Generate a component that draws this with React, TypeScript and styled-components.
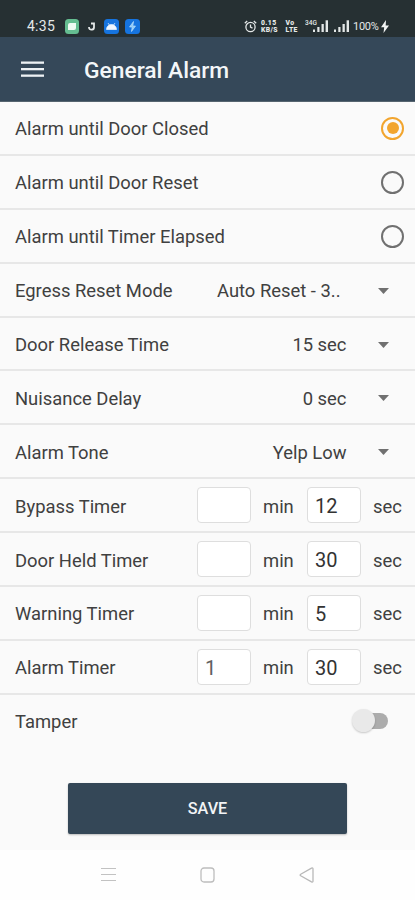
import React, { useState } from "react";
import styled, { createGlobalStyle } from "styled-components";

const GlobalStyle = createGlobalStyle`
  * { box-sizing: border-box; }
  body { margin: 0; background: #fafafa; font-family: Roboto, "Liberation Sans", sans-serif; }
`;

const Screen = styled.div`
  width: 415px;
  height: 900px;
  display: flex;
  flex-direction: column;
  overflow: hidden;
  background: #fafafa;
  color: #404040;
`;

const StatusBar = styled.div`
  height: 37px;
  flex: none;
  display: flex;
  align-items: flex-end;
  justify-content: space-between;
  padding: 0 26px 3px 27px;
  background: #263033;
  color: #e4e8e8;
`;

const StatusGroup = styled.div<{ $gap: number }>`
  display: flex;
  align-items: center;
  height: 16px;
  gap: ${(p) => p.$gap}px;
  svg { display: block; flex: none; }
`;

const Clock = styled.span`
  font-size: 14px;
  line-height: 16px;
  width: 32.5px;
  letter-spacing: 0.25px;
  white-space: nowrap;
`;

const Stack = styled.span<{ $width: number }>`
  display: flex;
  flex-direction: column;
  width: ${(p) => p.$width}px;
  padding-top: 1px;
  font-size: 6.8px;
  font-weight: 900;
  line-height: 7px;
  letter-spacing: 0.4px;
  white-space: nowrap;
`;

const Battery = styled.span`
  font-size: 11px;
  line-height: 16px;
  width: 23.5px;
  padding-top: 1px;
  letter-spacing: -0.3px;
`;

const AppBar = styled.header`
  height: 65px;
  flex: none;
  display: flex;
  align-items: center;
  gap: 40px;
  padding: 0 22px 0 21px;
  background: #354859;
  border-bottom: 1px solid #566570;
`;

const MenuButton = styled.button`
  display: flex;
  padding: 0;
  border: 0;
  background: none;
`;

const Title = styled.h1`
  margin: 3px 0 0;
  font-size: 22.8px;
  line-height: 30px;
  font-weight: 500;
  color: #f3f6f8;
  white-space: nowrap;
`;

const Settings = styled.main`
  flex: none;
  display: flex;
  flex-direction: column;
`;

const Row = styled.div<{ $last?: boolean }>`
  height: 53.9px;
  flex: none;
  display: flex;
  align-items: center;
  padding: 0 12px 0 15px;
  border-bottom: 2px solid ${(p) => (p.$last ? "transparent" : "#e7e7e7")};
  font-size: 18.4px;
  line-height: 24px;
  white-space: nowrap;
`;

const Label = styled.span`
  flex: 1;
  padding-top: 3px;
`;

const RadioDot = styled.span<{ $on: boolean }>`
  width: 23px;
  height: 23px;
  display: grid;
  place-items: center;
  margin: 1px -1px 0 0;
  border-radius: 50%;
  border: 2px solid ${(p) => (p.$on ? "#f2a52e" : "#707070")};
  &::after {
    content: "";
    width: 12px;
    height: 12px;
    border-radius: 50%;
    background: ${(p) => (p.$on ? "#f2a52e" : "transparent")};
  }
`;

const Value = styled.span<{ $clipped?: boolean }>`
  padding-top: 3px;
  margin-right: ${(p) => (p.$clipped ? 37 : 31)}px;
`;

const Caret = styled.svg`
  display: block;
  margin: 2px 14.5px 0 0;
`;

const Field = styled.div<{ $muted?: boolean }>`
  width: 54px;
  height: 36px;
  padding: 1px 7px 0;
  border: 1px solid #dedede;
  border-radius: 4px;
  background: #fff;
  color: ${(p) => (p.$muted ? "#606060" : "#333")};
  font-size: 20px;
  line-height: 35px;
`;

const Unit = styled.span<{ $width: number }>`
  width: ${(p) => p.$width}px;
  padding-top: 3px;
  margin-left: 12px;
`;

const Toggle = styled.button`
  width: 38px;
  height: 24px;
  display: flex;
  align-items: center;
  margin: 0 13px 0 0;
  padding: 0;
  border: 0;
  background: none;
`;

const Thumb = styled.span`
  width: 23px;
  height: 23px;
  flex: none;
  border-radius: 50%;
  background: #e9e9e9;
  box-shadow: 0 1px 2px rgba(0, 0, 0, 0.2);
  z-index: 1;
`;

const Track = styled.span`
  width: 22px;
  height: 16px;
  margin-left: -9px;
  border-radius: 0 8px 8px 0;
  background: #acacac;
`;

const SaveButton = styled.button`
  width: 279px;
  height: 51px;
  flex: none;
  align-self: center;
  margin: 34px 0 16px;
  border: 0;
  border-radius: 2px;
  background: #344757;
  box-shadow: 0 1px 2px rgba(0, 0, 0, 0.25);
  color: #f2f4f6;
  font: 500 16.2px/51px Roboto, sans-serif;
  padding: 0;
`;

const NavBar = styled.nav`
  flex: 1;
  display: flex;
  justify-content: center;
  gap: 84px;
  padding-top: 17px;
  background: #fefefe;
  svg { display: block; flex: none; }
`;

const AlarmIcon = () => (
  <svg width="13" height="13" viewBox="0 0 13 13" fill="none" stroke="#e4e8e8" strokeWidth="1.3">
    <circle cx="6.5" cy="7" r="4.6" />
    <path d="M.8 3.2 3.2 1M12.2 3.2 9.8 1M6.5 4.5v2.7l2 .9" />
  </svg>
);

const Signal = ({ label, width }: { label?: string; width: number }) => (
  <svg width={width} height="14" viewBox={`0 0 ${width} 14`} fill="#e4e8e8">
    {label && (
      <text x="0" y="6" fontSize="6.5" fontFamily="Roboto, sans-serif" fontWeight="500">{label}</text>
    )}
    <rect x={width - 15} y="10.5" width="2" height="2.5" />
    <rect x={width - 10.7} y="8" width="2.2" height="5" />
    <rect x={width - 6.5} y="5" width="2.3" height="8" />
    <rect x={width - 2.4} y="1.3" width="2.4" height="11.7" />
  </svg>
);

type Choice = { label: string };
const choices: Choice[] = [
  { label: "Alarm until Door Closed" },
  { label: "Alarm until Door Reset" },
  { label: "Alarm until Timer Elapsed" },
];
const selects = [
  { label: "Egress Reset Mode", value: "Auto Reset - 3..", clipped: true },
  { label: "Door Release Time", value: "15 sec" },
  { label: "Nuisance Delay", value: "0 sec" },
  { label: "Alarm Tone", value: "Yelp Low" },
];
const timers = [
  { label: "Bypass Timer", min: "", sec: "12" },
  { label: "Door Held Timer", min: "", sec: "30" },
  { label: "Warning Timer", min: "", sec: "5" },
  { label: "Alarm Timer", min: "1", sec: "30" },
];

export default function App() {
  const [selected, setSelected] = useState(0);
  return (
    <>
      <GlobalStyle />
      <Screen>
        <StatusBar>
          <StatusGroup $gap={5.5}>
            <Clock>4:35</Clock>
            <svg width="14" height="15" viewBox="0 0 14 15">
              <rect width="14" height="15" rx="3.5" fill="#65bd91" />
              <path d="M3 6q0-2 2-2h6v5q0 2-2 2H3z" fill="#effaf3" />
            </svg>
            <svg width="14" height="14" viewBox="0 0 14 14">
              <path d="M4 8q0 3 3 2.6 2.2-.4 2-2.6V4.500H6" fill="none" stroke="#e4e8e8" strokeWidth="1.8" />
            </svg>
            <svg width="15" height="15" viewBox="0 0 15 15">
              <rect width="15" height="15" rx="3.5" fill="#1674df" />
              <path d="M2.500 10.500a5 5 0 0 1 10 0zM4 4l1.300 2M11 4 9.700 6" fill="#eef6ff" stroke="#eef6ff" strokeWidth=".7" />
            </svg>
            <svg width="15" height="15" viewBox="0 0 15 15">
              <rect width="15" height="15" rx="3.500" fill="#1674df" />
              <path d="M8.500 2.500 4.500 8h2.700l-.7 4.500L10.500 7H7.800z" fill="#8bc9f7" stroke="#c8e8ff" strokeWidth=".6" />
            </svg>
          </StatusGroup>
          <StatusGroup $gap={4.5}>
            <AlarmIcon />
            <Stack $width={20}><span>0.15</span><span>KB/S</span></Stack>
            <Stack $width={15}><span>Vo</span><span>LTE</span></Stack>
            <Signal label="34G" width={23} />
            <Signal width={16} />
            <Battery>100%</Battery>
            <svg width="8" height="13" viewBox="0 0 8 13">
              <path d="M5 0 0 7.200h3.200L2.500 13 8 5.500H4.700z" fill="#f2f5f5" />
            </svg>
          </StatusGroup>
        </StatusBar>
        <AppBar>
          <MenuButton aria-label="Menu">
            <svg width="23" height="17" viewBox="0 0 23 17" fill="#edf1f4">
              <rect y="0.500" width="23" height="2.300" />
              <rect y="7" width="23" height="2.300" />
              <rect y="13.500" width="23" height="2.300" />
            </svg>
          </MenuButton>
          <Title>General Alarm</Title>
        </AppBar>
        <Settings>
          {choices.map((c, i) => (
            <Row key={c.label} onClick={() => setSelected(i)}>
              <Label>{c.label}</Label>
              <RadioDot $on={selected === i} role="radio" aria-checked={selected === i} />
            </Row>
          ))}
          {selects.map((s) => (
            <Row key={s.label}>
              <Label>{s.label}</Label>
              <Value $clipped={s.clipped}>{s.value}</Value>
              <Caret width="11" height="6" viewBox="0 0 11 6">
                <path d="M0 0h11L5.500 6z" fill="#707070" />
              </Caret>
            </Row>
          ))}
          {timers.map((t) => (
            <Row key={t.label}>
              <Label>{t.label}</Label>
              <Field $muted>{t.min}</Field>
              <Unit $width={44}>min</Unit>
              <Field>{t.sec}</Field>
              <Unit $width={30}>sec</Unit>
            </Row>
          ))}
          <Row $last>
            <Label>Tamper</Label>
            <Toggle role="switch" aria-checked={false} aria-label="Tamper">
              <Thumb />
              <Track />
            </Toggle>
          </Row>
        </Settings>
        <SaveButton>SAVE</SaveButton>
        <NavBar>
          <svg width="15" height="15" viewBox="0 0 15 15" stroke="#c2c2c2" strokeWidth="1.200">
            <path d="M0 1.500h15M0 7.500h15M0 13.500h15" />
          </svg>
          <svg width="15" height="16" viewBox="0 0 15 16" fill="none" stroke="#bdbdbd" strokeWidth="1.300">
            <rect x="1" y="1" width="13" height="14" rx="3" />
          </svg>
          <svg width="15" height="16" viewBox="0 0 15 16" fill="none" stroke="#b8b8b8" strokeWidth="1.300">
            <path d="M12.500 1.200Q14 .5 14 2v12q0 1.500-1.500.8L1.700 8.800Q.5 8 1.700 7.200z" />
          </svg>
        </NavBar>
      </Screen>
    </>
  );
}
